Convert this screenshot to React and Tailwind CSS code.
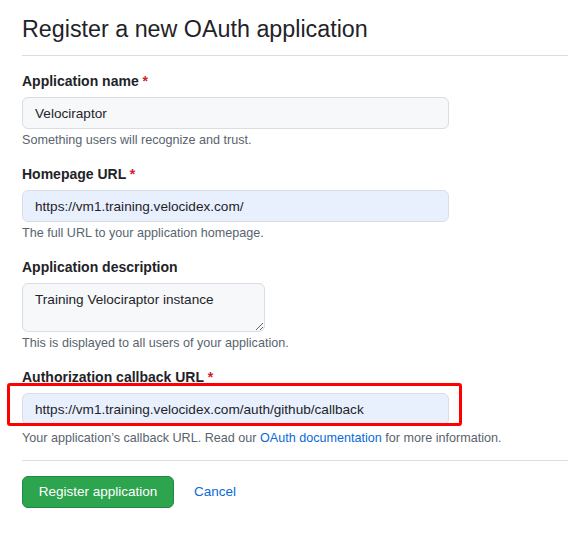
import React from 'react'

// Single form row: label, field, hint underneath
function Field({ label, required, children, hint, hintGap = 'mt-[2px]' }) {
  return (
    <div className="mt-[15px]">
      <label className="block text-[14px] leading-[21px] font-bold text-[#1f2328]">
        {label}
        {required && <span className="text-[#cf222e]"> *</span>}
      </label>
      <div className="mt-[5px]">{children}</div>
      <p className={`${hintGap} text-[12.6px] leading-[18px] text-[#59636e]`}>{hint}</p>
    </div>
  )
}

const inputBase =
  'block h-8 rounded-md border border-[#d8dee4] px-3 text-[13.6px] text-[#1f2328] outline-none'

export default function App() {
  return (
    <div className="min-h-screen bg-white pl-[22px] font-['Liberation_Sans',Arial,sans-serif] overflow-hidden">
      <h1 className="pt-[14px] pb-[11px] text-[23.3px] leading-[30px] font-normal text-[#1f2328] border-b border-[#d8dee4] w-[600px]">
        Register a new OAuth application
      </h1>

      <form onSubmit={e => e.preventDefault()}>
        <Field label="Application name" required hint="Something users will recognize and trust.">
          <input className={`${inputBase} w-[427px] bg-[#f6f8fa]`} defaultValue="Velociraptor" />
        </Field>

        <Field label="Homepage URL" required hint="The full URL to your application homepage.">
          <input
            className={`${inputBase} w-[427px] bg-[#e8f0fe]`}
            defaultValue="https://vm1.training.velocidex.com/"
          />
        </Field>

        <Field
          label="Application description"
          hint="This is displayed to all users of your application."
        >
          <textarea
            className="block w-[243px] h-[49px] rounded-md border border-[#d8dee4] bg-[#f6f8fa] px-3 py-[6px] text-[13.6px] leading-[20px] text-[#1f2328] outline-none"
            defaultValue="Training Velociraptor instance"
          />
        </Field>

        <Field
          label="Authorization callback URL"
          required
          hintGap="mt-[4px]"
          hint={
            <>
              Your application’s callback URL. Read our{' '}
              <a href="#" className="text-[#0969da]">OAuth documentation</a> for more information.
            </>
          }
        >
          <div className="relative">
            <input
              className={`${inputBase} w-[427px] bg-[#e8f0fe]`}
              defaultValue="https://vm1.training.velocidex.com/auth/github/callback"
            />
            {/* highlight around the callback field */}
            <div className="absolute left-[-15px] top-[-10px] w-[455px] h-[43px] border-[3px] border-[#ff0000] rounded-[3px] pointer-events-none" />
          </div>
        </Field>

        <div className="mt-[13px] w-[600px] border-t border-[#d8dee4]" />

        <div className="mt-[15px] flex items-center gap-5">
          <button
            type="submit"
            className="h-8 w-[152px] rounded-md border border-[#1f883d] bg-[#2da44e] text-[13.5px] text-white"
          >
            Register application
          </button>
          <a href="#" className="text-[13.5px] text-[#0969da]">Cancel</a>
        </div>
      </form>
    </div>
  )
}
